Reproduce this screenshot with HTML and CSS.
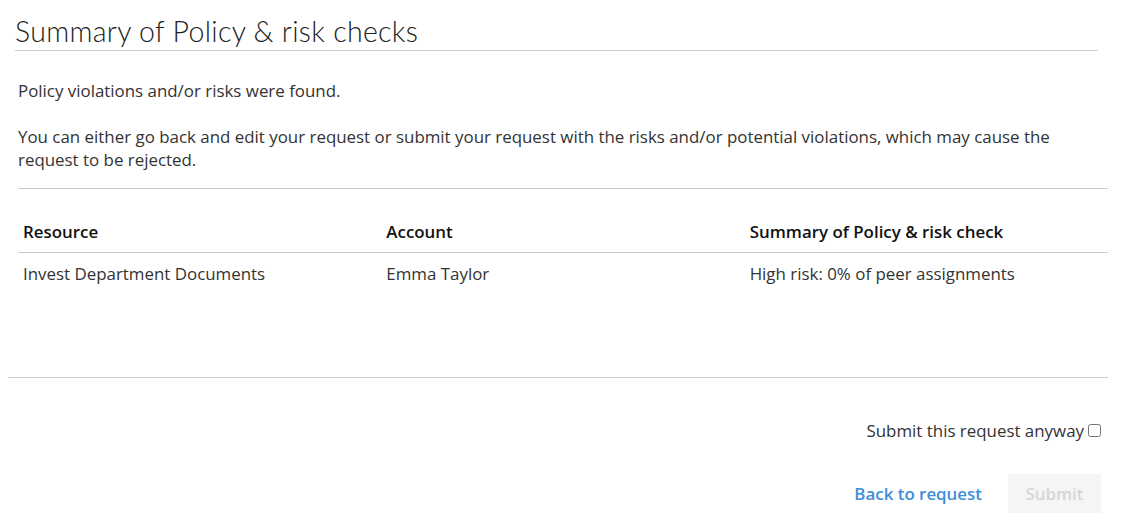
FILE: index.html
```html
<!DOCTYPE html>
<html lang="en">
<head>
  <meta charset="UTF-8">
  <meta name="viewport" content="width=device-width, initial-scale=1.0">
  <title>Summary of Policy &amp; risk checks</title>
  <link rel="stylesheet" href="styles.css">
</head>
<body>
  <div class="page">
    <div class="title-bar">
      <h1>Summary of Policy &amp; risk checks</h1>
    </div>

    <div class="content">
      <div class="message">
        <p>Policy violations and/or risks were found.</p>
        <p>You can either go back and edit your request or submit your request with the risks and/or potential violations, which may cause the request to be rejected.</p>
      </div>

      <table class="checks">
        <thead>
          <tr>
            <th>Resource</th>
            <th>Account</th>
            <th>Summary of Policy &amp; risk check</th>
          </tr>
        </thead>
        <tbody>
          <tr>
            <td>Invest Department Documents</td>
            <td>Emma Taylor</td>
            <td>High risk: 0% of peer assignments</td>
          </tr>
        </tbody>
      </table>
    </div>

    <div class="footer">
      <label class="confirm">Submit this request anyway <input type="checkbox" id="anyway"></label>
      <div class="actions">
        <a href="#" class="back-link">Back to request</a>
        <button class="submit-btn" id="submitBtn" disabled>Submit</button>
      </div>
    </div>
  </div>

  <script>
    document.getElementById("anyway").onchange = function () {
      document.getElementById("submitBtn").disabled = !this.checked;
    };
  </script>
</body>
</html>
```

FILE: styles.css
```css
body {
  margin: 8px;
  font-family: "Open Sans", sans-serif;
  font-size: 16.9px;
  color: #333;
}

.page { width: 1100px; }

/* title */
.title-bar {
  padding: 0 10px 0 7px;
}
.title-bar h1 {
  margin: 0;
  padding-top: 7px;
  padding-bottom: 3px;
  font-family: "Lato", sans-serif;
  font-weight: 300;
  font-size: 28.5px;
  letter-spacing: 0.3px;
  line-height: 32px;
  color: #222;
  border-bottom: 1px solid #ccc;
}

/* message + table */
.content {
  margin-left: 10px;
  height: 326px;
}
.message {
  padding: 28px 12px 17px 0;
  border-bottom: 1px solid #ccc;
  line-height: 23px;
}
.message p {
  margin: 0 0 23px;
}
.message p:last-child { margin-bottom: 0; }

.checks {
  width: 100%;
  margin-top: 23px;
  border-collapse: collapse;
  table-layout: fixed;
}
.checks th {
  text-align: left;
  font-weight: 600;
  color: #111;
  padding: 8px 5px 9px;
  line-height: 23px;
  border-bottom: 1px solid #ccc;
}
.checks td {
  padding: 9px 5px 11px;
  line-height: 23px;
}

/* footer */
.footer {
  border-top: 1px solid #ccc;
  padding-right: 7px;
  display: flex;
  flex-direction: column;
  align-items: flex-end;
}
.confirm {
  margin-top: 41px;
  display: flex;
  align-items: center;
  gap: 4px;
  line-height: 23px;
}
.confirm input {
  margin: 0;
  width: 13px;
  height: 13px;
}
.actions {
  margin-top: 32px;
  display: flex;
  align-items: center;
  gap: 26px;
}
.back-link {
  color: #3d8dd8;
  font-weight: 600;
  text-decoration: none;
}
.submit-btn {
  width: 93px;
  height: 39px;
  border: none;
  background: #f5f5f5;
  color: #d6d6d6;
  font-family: "Open Sans", sans-serif;
  font-size: 16.9px;
  font-weight: 600;
}
.submit-btn:not(:disabled) {
  background: #3d8dd8;
  color: #fff;
  cursor: pointer;
}
```
